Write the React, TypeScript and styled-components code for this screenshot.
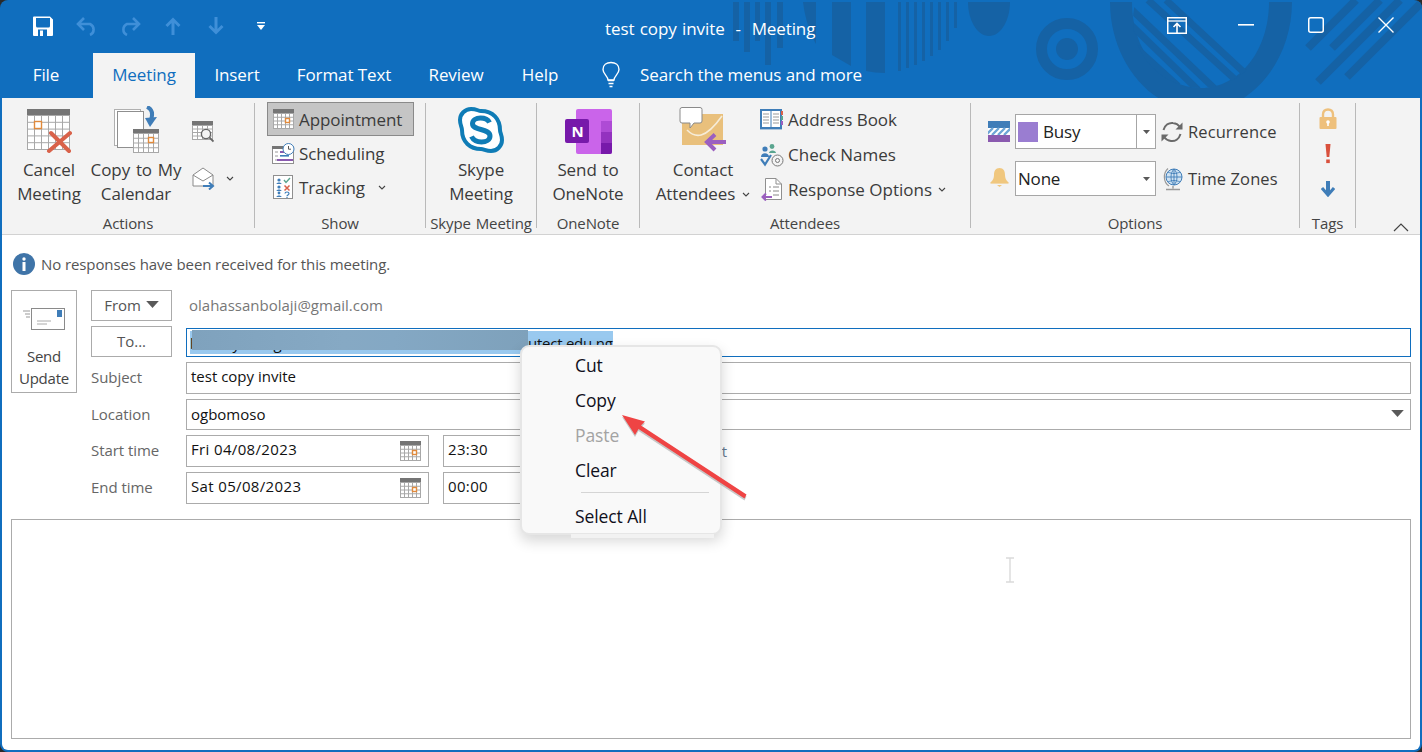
import React from 'react';
import styled, { createGlobalStyle } from 'styled-components';

const FONT = `'Open Sans', 'Noto Sans', 'Liberation Sans', sans-serif`;
const BLUE = '#106ebe';
const PATTERN = '#1562a5';

const Global = createGlobalStyle`
  html, body { margin: 0; padding: 0; background: #222; }
  * { box-sizing: border-box; }
  svg { display: block; flex-shrink: 0; }
`;

const Page = styled.div`
  width: 1422px;
  height: 752px;
  background: #2a2a2a;
  font-family: ${FONT};
  overflow: hidden;
`;

const Win = styled.div`
  position: relative;
  width: 100%;
  height: 100%;
  background: ${BLUE};
  border-radius: 8px;
  padding: 0 2px 2px;
  display: flex;
  flex-direction: column;
  overflow: hidden;
`;

/* ---------- title bar ---------- */

const Header = styled.header`
  position: relative;
  height: 98px;
  flex-shrink: 0;
`;

const PatternLayer = styled.svg`
  position: absolute;
  left: -2px;
  top: 0;
`;

const TitleRow = styled.div`
  position: relative;
  height: 53px;
  display: grid;
  grid-template-columns: 603px 1fr auto;
  align-items: center;
  color: #fff;
`;

const Qat = styled.div`
  display: flex;
  align-items: center;
  padding: 0 0 0 31px;
  height: 53px;
  margin-top: -2px;
`;

const QatSlot = styled.div<{ $w: number }>`
  width: ${(p) => p.$w}px;
`;

const Title = styled.div`
  font-size: 17px;
  letter-spacing: -0.1px;
  word-spacing: 1.1px;
  white-space: pre;
  margin-top: 3px;
`;

const Caption = styled.div`
  display: flex;
  align-items: center;
  height: 53px;
  margin-top: -3px;
`;

const CaptionBtn = styled.div<{ $w: number }>`
  width: ${(p) => p.$w}px;
  display: flex;
  justify-content: center;
`;

const TabRow = styled.nav`
  position: relative;
  height: 45px;
  display: grid;
  grid-template-columns: 91px 102px 84px 130px 94px 74px auto;
  align-items: stretch;
`;

const Tab = styled.div<{ $active?: boolean }>`
  display: flex;
  align-items: center;
  justify-content: center;
  padding-bottom: 2px;
  font-size: 17px;
  letter-spacing: -0.1px;
  color: ${(p) => (p.$active ? BLUE : '#fff')};
  background: ${(p) => (p.$active ? '#f3f3f3' : 'transparent')};
`;

const FileTab = styled(Tab)`
  padding-right: 3px;
`;

const SearchBox = styled.div`
  display: flex;
  align-items: center;
  color: #fff;
  font-size: 17px;
  letter-spacing: -0.1px;
  padding: 0 0 2px 24px;
  gap: 19px;
`;

/* ---------- ribbon ---------- */

const Ribbon = styled.section`
  height: 137px;
  flex-shrink: 0;
  background: #f3f3f3;
  border-bottom: 1px solid #d2d2d2;
  display: flex;
  color: #3b3b3b;
`;

const Group = styled.div<{ $w: number }>`
  width: ${(p) => p.$w}px;
  display: flex;
  flex-direction: column;
`;

const GroupBody = styled.div<{ $pad?: number }>`
  display: flex;
  flex: 1;
  padding-left: ${(p) => p.$pad ?? 0}px;
  min-height: 0;
`;

const GroupLabel = styled.div`
  height: 20px;
  margin-bottom: 1px;
  line-height: 20px;
  text-align: center;
  font-size: 15px;
  letter-spacing: -0.1px;
  word-spacing: 1px;
  white-space: nowrap;
  color: #444;
`;

const Sep = styled.div`
  width: 1px;
  margin: 5px 0 6px;
  background: #b9b9b9;
  flex-shrink: 0;
`;

const BigBtn = styled.div<{ $w: number }>`
  width: ${(p) => p.$w}px;
  display: flex;
  flex-direction: column;
  align-items: center;
  padding-top: 6px;
  font-size: 17px;
  letter-spacing: -0.1px;
  word-spacing: 1.5px;
  line-height: 24px;
  text-align: center;
  white-space: nowrap;
`;

const BigIcon = styled.div`
  height: 54px;
  display: flex;
  align-items: flex-end;
  justify-content: center;
  padding-bottom: 4px;
`;

const CaretLine = styled.span`
  display: flex;
  align-items: center;
  justify-content: center;
  gap: 7px;
`;

const SmallIconCol = styled.div`
  margin-left: 8px;
  padding-top: 23px;
  display: flex;
  flex-direction: column;
  gap: 24px;
`;

const IconWithCaret = styled.div`
  display: flex;
  align-items: center;
  gap: 11px;
`;

const ShowCol = styled.div`
  width: 147px;
  padding-top: 4px;
  display: flex;
  flex-direction: column;
`;

const ShowRow = styled.div<{ $on?: boolean }>`
  height: 34px;
  display: flex;
  align-items: center;
  padding-left: 4px;
  font-size: 17px;
  letter-spacing: -0.1px;
  border: 1px solid ${(p) => (p.$on ? '#8a8a8a' : 'transparent')};
  background: ${(p) => (p.$on ? '#c5c5c5' : 'transparent')};
`;

const RowIcon = styled.div<{ $w: number }>`
  width: ${(p) => p.$w}px;
  display: flex;
  justify-content: center;
  margin-right: 5px;
`;

const Caret = styled.span<{ $ml: number }>`
  margin-left: ${(p) => p.$ml}px;
`;

const SmallCol = styled.div`
  padding-top: 4px;
  display: flex;
  flex-direction: column;
`;

const SmallRow = styled.div`
  height: 35px;
  display: flex;
  align-items: center;
  font-size: 17px;
  white-space: nowrap;
`;

const OptionsGrid = styled.div`
  padding-top: 16px;
  display: grid;
  grid-template-columns: 22px 141px auto;
  grid-auto-rows: 35px;
  column-gap: 5px;
  row-gap: 12px;
  align-items: center;
`;

const BellSlot = styled.div`
  display: flex;
  justify-content: center;
  margin-top: -3px;
`;

const DropSelect = styled.div`
  height: 35px;
  background: #fff;
  border: 1px solid #a6a6a6;
  display: flex;
  align-items: center;
  font-size: 17px;
  color: #222;
  padding-left: 2px;
`;

const Swatch = styled.span`
  width: 20px;
  height: 20px;
  background: #9a7dd1;
  margin-right: 5px;
`;

const SelectText = styled.span`
  flex: 1;
  letter-spacing: -0.2px;
`;

const SelectArrow = styled.span<{ $split?: boolean }>`
  width: 19px;
  height: 33px;
  display: flex;
  align-items: center;
  justify-content: center;
  border-left: 1px solid ${(p) => (p.$split ? '#a6a6a6' : 'transparent')};
`;

const OptionSide = styled.div`
  display: flex;
  align-items: center;
  gap: 4px;
  font-size: 16.5px;
  letter-spacing: 0.1px;
  white-space: nowrap;
  margin-left: -1px;
`;

const TagCol = styled.div`
  padding-top: 3px;
  display: flex;
  flex-direction: column;
  align-items: center;
  width: 100%;
`;

const TagSlot = styled.div`
  height: 35px;
  display: flex;
  align-items: center;
`;

const Collapse = styled.div`
  margin-left: auto;
  margin-right: 11px;
  align-self: flex-end;
  padding-bottom: 2px;
`;

/* ---------- form ---------- */

const Content = styled.main`
  flex: 1;
  background: #fff;
  display: flex;
  flex-direction: column;
  min-height: 0;
  border-bottom-left-radius: 6px;
  border-bottom-right-radius: 6px;
`;

const InfoBar = styled.div`
  height: 55px;
  padding: 3px 0 0 11px;
  display: flex;
  align-items: center;
  gap: 6px;
  font-size: 15px;
  letter-spacing: -0.1px;
  color: #555;
  flex-shrink: 0;
`;

const Form = styled.div`
  display: flex;
  padding: 0 9px;
  flex-shrink: 0;
`;

const SendBtn = styled.div`
  width: 66px;
  height: 103px;
  margin-right: 14px;
  border: 1px solid #ababab;
  display: flex;
  flex-direction: column;
  align-items: center;
  padding-top: 16px;
  font-size: 15px;
  letter-spacing: -0.2px;
  line-height: 21.5px;
  color: #444;
  text-align: center;
`;

const SendIcon = styled.div`
  height: 39px;
`;

const Fields = styled.div`
  flex: 1;
  display: flex;
  flex-direction: column;
  gap: 5px;
`;

const FieldRow = styled.div<{ $h: number }>`
  height: ${(p) => p.$h}px;
  display: flex;
  align-items: center;
`;

const FieldLabel = styled.div`
  width: 95px;
  padding-bottom: 2px;
  font-size: 15px;
  letter-spacing: -0.05px;
  color: #666;
  flex-shrink: 0;
`;

const SideBtn = styled.div`
  width: 81px;
  height: 31px;
  margin-right: 14px;
  padding-bottom: 2px;
  border: 1px solid #ababab;
  display: flex;
  align-items: center;
  justify-content: center;
  gap: 5px;
  font-size: 15px;
  letter-spacing: -0.05px;
  color: #555;
  flex-shrink: 0;
`;

const FromAddress = styled.div`
  margin-left: 3px;
  padding-bottom: 2px;
  font-size: 15px;
  color: #777;
`;

const TextInput = styled.div<{ $lift?: number }>`
  flex: 1;
  height: 100%;
  border: 1px solid #ababab;
  padding-left: 4px;
  padding-bottom: ${(p) => p.$lift ?? 0}px;
  display: flex;
  align-items: center;
  font-size: 15px;
  color: #111;
`;

const ToInput = styled(TextInput)`
  position: relative;
  height: 29px;
  margin-top: 1px;
  border-color: #106ebe;
  overflow: hidden;
  padding-left: 3px;
`;

const Selected = styled.div`
  background: #99c9ef;
  height: 23px;
  display: flex;
  align-items: flex-end;
  line-height: 22px;
  letter-spacing: -0.25px;
  white-space: nowrap;
`;

const HiddenName = styled.span`
  width: 338px;
  word-spacing: 30px;
  overflow: hidden;
`;

const BlurPatch = styled.div`
  position: absolute;
  left: 5px;
  top: 1px;
  width: 336px;
  height: 20px;
  background: linear-gradient(90deg, #7fa2bd, #86a9c4 45%, #84a8c4 60%, #7ea1bb);
`;

const DateInput = styled(TextInput)<{ $w: number }>`
  flex: none;
  width: ${(p) => p.$w}px;
  justify-content: space-between;
  padding-right: 7px;
  letter-spacing: 0.35px;
`;

const DateIconSlot = styled.span`
  margin-bottom: -4px;
`;

const Gap14 = styled.div`
  width: 14px;
  flex-shrink: 0;
`;

const AllDay = styled.div`
  width: 167px;
  text-align: right;
  font-size: 15px;
  color: #64788e;
  white-space: nowrap;
`;

const LocationArrow = styled.div`
  margin-left: auto;
  margin-right: 6px;
`;

const Body = styled.div`
  position: relative;
  flex: 1;
  margin: 15px 9px 11px;
  border: 1px solid #ababab;
`;

const Cursor = styled.svg`
  position: absolute;
  left: 991px;
  top: 37px;
`;

/* ---------- context menu + annotation ---------- */

const Menu = styled.div`
  position: absolute;
  left: 520px;
  top: 345px;
  width: 202px;
  height: 190px;
  background: #f9f9f9;
  border: 2px solid #e6e6e6;
  border-radius: 9px;
  box-shadow: 0 6px 14px rgba(0, 0, 0, 0.16);
  padding-top: 2px;
  font-size: 17.5px;
  letter-spacing: -0.1px;
  color: #10101c;
`;

const MenuItem = styled.div<{ $off?: boolean }>`
  height: 35px;
  line-height: 33px;
  padding-left: 53px;
  color: ${(p) => (p.$off ? '#a3a3a3' : 'inherit')};
`;

const MenuSep = styled.div`
  height: 1px;
  margin: 3px 11px 7px 59px;
  background: #d5d5d5;
`;

const MenuFoot = styled.div`
  height: 4px;
  margin: -1px 6px 0 49px;
  background: #f2f2f2;
`;

const Annotation = styled.svg`
  position: absolute;
  left: 610px;
  top: 405px;
`;

/* ---------- drawings ---------- */

const Pattern = () => (
  <PatternLayer width={1422} height={98} viewBox="0 0 1422 98">
    <defs>
      <clipPath id="inner">
        <circle cx={1201} cy={20} r={68} />
      </clipPath>
    </defs>
    <g fill={PATTERN}>
      <rect x={733} y={2} width={6} height={39} />
      <rect x={744} y={2} width={6} height={50} />
      <rect x={755} y={2} width={5} height={39} />
      <rect x={765} y={2} width={6} height={63} />
      <rect x={777} y={2} width={6} height={46} />
      <path d="M803 2H816V44C810 34 805 18 803 2Z" />
      <path d="M832 2H851V66L832 55Z" />
      <path d="M866 2H885V73C878 73 872 72 866 71Z" />
      <rect x={898} y={2} width={3} height={69} />
      <rect x={906} y={2} width={3} height={66} />
      <rect x={914} y={2} width={3} height={63} />
      <rect x={922} y={2} width={3} height={59} />
      <rect x={930} y={2} width={3} height={54} />
      <rect x={938} y={2} width={3} height={48} />
      <rect x={946} y={2} width={3} height={39} />
      <rect x={954} y={2} width={3} height={26} />
      <path d="M968 2H1010C1010 20 1001 36 989 36C977 36 968 20 968 2Z" />
    </g>
    <circle cx={1067} cy={49} r={25.5} fill="none" stroke={PATTERN} strokeWidth={11} />
    <circle cx={1067} cy={49} r={11} fill={PATTERN} />
    <path d="M1110 2C1110 60 1150 111 1201 111C1252 111 1292 60 1292 2H1269C1269 50 1240 88 1201 88C1162 88 1132 50 1132 2Z" fill={PATTERN} />
    <g clipPath="url(#inner)" stroke={PATTERN} strokeWidth={7} fill="none">
      <path d="M1148 0L1240 84" />
      <path d="M1166 0L1250 78" />
      <path d="M1130 8L1216 90" />
      <path d="M1130 24L1198 90" />
      <path d="M1134 46L1178 86" />
    </g>
    <g stroke={PATTERN} strokeWidth={8} fill="none">
      <path d="M1308 48L1356 0" />
      <path d="M1332 48L1380 0" />
      <path d="M1318 82L1400 0" />
      <path d="M1347 77L1424 0" />
    </g>
  </PatternLayer>
);

const Cal = ({ w, h, cols, rows, mark, head = 4 }: { w: number; h: number; cols: number; rows: number; mark?: [number, number, number]; head?: number }) => {
  const lines: React.ReactNode[] = [];
  for (let i = 0; i <= cols; i++) {
    const x = 0.5 + ((w - 1) * i) / cols;
    lines.push(<line key={`c${i}`} x1={x} x2={x} y1={head} y2={h} stroke="#a8a8a8" />);
  }
  for (let i = 0; i <= rows; i++) {
    const y = head + 0.5 + ((h - head - 1) * i) / rows;
    lines.push(<line key={`r${i}`} x1={0} x2={w} y1={y} y2={y} stroke="#a8a8a8" />);
  }
  return (
    <g>
      <rect width={w} height={h} fill="#fff" />
      {lines}
      <rect width={w} height={head} fill="#757575" />
      {mark && <rect x={mark[0] + 0.5} y={mark[1] + 0.5} width={mark[2]} height={mark[2]} fill="#fff" stroke="#e08a3c" strokeWidth={1.4} />}
    </g>
  );
};

const SmallCal = () => (
  <svg width={21} height={20} viewBox="0 0 21 20">
    <Cal w={21} h={20} cols={5} rows={4} mark={[12, 9, 4]} />
  </svg>
);

const Chevron = ({ size = 8 }: { size?: number }) => (
  <svg width={size} height={5} viewBox="0 0 8 5">
    <path d="M1 1L4 4L7 1" fill="none" stroke="#444" strokeWidth={1.1} />
  </svg>
);

const Tri = ({ w = 9, h = 5 }: { w?: number; h?: number }) => (
  <svg width={w} height={h} viewBox="0 0 9 5">
    <path d="M0 0H9L4.5 5Z" fill="#595959" />
  </svg>
);

const CancelIcon = () => (
  <svg width={46} height={46} viewBox="-1 0 46 46">
    <g transform="translate(0 1)">
      <Cal w={43} h={41} cols={6} rows={5} mark={[7, 12, 7]} head={6} />
    </g>
    <path d="M22 43L43 25M24 25L42 43" stroke="#d9624a" strokeWidth={4} strokeLinecap="round" fill="none" />
  </svg>
);

const CopyCalIcon = () => (
  <svg width={46} height={48} viewBox="-1 0 46 48">
    <rect x={0.5} y={3.5} width={26} height={36} fill="#fff" stroke="#b0b0b0" />
    <rect x={3.5} y={5.5} width={26} height={36} fill="#fff" stroke="#8f8f8f" />
    <path d="M33 1C38 3 39 8 37 14" fill="none" stroke="#3f7db8" strokeWidth={4} />
    <path d="M31 12L43 11L36 21Z" fill="#3f7db8" />
    <g transform="translate(19 23)">
      <Cal w={26} h={24} cols={5} rows={4} mark={[15, 8, 5]} />
    </g>
  </svg>
);

const CalSearchIcon = () => (
  <svg width={22} height={22} viewBox="0 0 22 22">
    <Cal w={21} h={19} cols={4} rows={4} />
    <circle cx={14} cy={13} r={4.6} fill="#f3f3f3" stroke="#666" strokeWidth={1.4} />
    <path d="M17.5 16.5L21.5 20.5" stroke="#666" strokeWidth={1.8} />
  </svg>
);

const MailForwardIcon = () => (
  <svg width={23} height={23} viewBox="0 0 23 23">
    <path d="M1 8L11 1L21 8V19H1Z" fill="#fff" stroke="#8a8a8a" />
    <path d="M1 8L11 14L21 8" fill="#fff" stroke="#8a8a8a" />
    <path d="M11 19H20M17 15.5L21 19L17 22.5" fill="none" stroke="#3f7db8" strokeWidth={2} />
  </svg>
);

const SchedulingIcon = () => (
  <svg width={23} height={21} viewBox="0 0 23 21">
    <rect x={0.5} y={3.5} width={21} height={17} fill="#fff" stroke="#8f8f8f" />
    <rect x={0} y={3} width={12} height={3} fill="#757575" />
    <path d="M3 9H6M3 13H6M3 17H6" stroke="#999" />
    <rect x={8} y={8} width={4} height={2} fill="#8a5aaf" />
    <rect x={8} y={12} width={9} height={1.6} fill="#3f7db8" />
    <rect x={5} y={16} width={16} height={2} fill="#8a5aaf" />
    <circle cx={16.5} cy={6} r={5.5} fill="#fff" stroke="#3f7db8" />
    <path d="M16.5 3V6.2H19" fill="none" stroke="#555" />
  </svg>
);

const TrackingIcon = () => (
  <svg width={20} height={24} viewBox="0 0 20 24">
    <rect x={0.5} y={0.5} width={19} height={23} fill="#fff" stroke="#8f8f8f" />
    <circle cx={6} cy={5} r={1.6} fill="#3f7db8" />
    <path d="M3.5 9C3.5 7 8.5 7 8.5 9Z" fill="#3f7db8" />
    <circle cx={6} cy={12} r={1.6} fill="#3f7db8" />
    <path d="M3.5 16C3.5 14 8.5 14 8.5 16Z" fill="#3f7db8" />
    <circle cx={6} cy={18} r={1.4} fill="#3f7db8" />
    <path d="M3.5 22C3.5 20 8.5 20 8.5 22Z" fill="#3f7db8" />
    <path d="M11 5L13 7.5L17 3" fill="none" stroke="#5aa58f" strokeWidth={1.4} />
    <path d="M11.5 10.5L16.5 15.5M16.5 10.5L11.5 15.5" stroke="#d9624a" strokeWidth={1.5} />
    <path d="M12 18.5C12 16.5 16 16.5 16 18.5C16 20 14 20 14 21.3M14 22V23" fill="none" stroke="#3f7db8" strokeWidth={1.2} />
  </svg>
);

const SkypeIcon = () => (
  <svg width={48} height={48} viewBox="0 0 48 48">
    <path d="M14 3C20 3 21 5 24 5C36 5 43 13 43 24C43 27 45 29 45 34C45 40 40 45 34 45C29 45 27 43 24 43C13 43 5 36 5 24C5 21 3 19 3 14C3 8 8 3 14 3Z" fill="#fff" stroke="#0f7cb6" strokeWidth={4} />
    <path d="M32.5 16.5C30.5 12.5 26.5 12 23.5 12C19 12 15.5 14 15.5 17.8C15.5 25 33 22 33 30C33 34 29 36 24.5 36C20.5 36 16.5 34.5 14.5 30.5" fill="none" stroke="#0f7cb6" strokeWidth={5} />
  </svg>
);

const NoteLetter = styled.text`
  font-family: ${FONT};
  font-size: 15px;
  font-weight: 700;
  fill: #fff;
`;

const OneNoteIcon = () => (
  <svg width={47} height={45} viewBox="0 0 47 45">
    <rect x={11} y={0} width={36} height={45} rx={2} fill="#ca64ea" />
    <rect x={36} y={12} width={11} height={11} fill="#ae4bd5" />
    <rect x={36} y={23} width={11} height={11} fill="#9332bf" />
    <path d="M36 34H47V43A2 2 0 0 1 45 45H36Z" fill="#7719aa" />
    <rect x={0} y={10} width={24} height={24} rx={2} fill="#7719aa" />
    <NoteLetter x={6.5} y={27.5}>N</NoteLetter>
  </svg>
);

const ContactIcon = () => (
  <svg width={48} height={48} viewBox="0 0 48 48">
    <rect x={3} y={8} width={41} height={31} fill="#e9c07c" />
    <path d="M8 24C16 32 26 34 43 10" fill="none" stroke="#f6ecd8" strokeWidth={1.6} />
    <path d="M3 1.5H21A2 2 0 0 1 23 3.5V15A2 2 0 0 1 21 17H15L11 22V17H3A2 2 0 0 1 1 15V3.5A2 2 0 0 1 3 1.5Z" fill="#fff" stroke="#8a8a8a" />
    <path d="M47 36H30M36 28.5L28 36L36 44" fill="none" stroke="#9b5fc0" strokeWidth={4} />
  </svg>
);

const AddressIcon = () => (
  <svg width={23} height={21} viewBox="0 0 23 21">
    <rect x={1} y={1} width={20} height={18} fill="#fff" stroke="#3f7db8" strokeWidth={2} />
    <path d="M11 2V19" stroke="#3f7db8" />
    <path d="M3 5H9M3 8H9M3 11H9M3 14H9M13 5H19M13 8H19M13 11H19M13 14H19" stroke="#999" />
    <rect x={0} y={18} width={22} height={2.4} fill="#3f7db8" />
    <rect x={21} y={2} width={2} height={4} fill="#d9624a" />
    <rect x={21} y={7} width={2} height={4} fill="#5aa58f" />
    <rect x={21} y={12} width={2} height={4} fill="#9b5fc0" />
  </svg>
);

const CheckNamesIcon = () => (
  <svg width={24} height={24} viewBox="0 0 24 24">
    <circle cx={5} cy={6} r={2.6} fill="#3f7db8" />
    <path d="M1 14C1 9 9 9 9 14Z" fill="#3f7db8" />
    <circle cx={12} cy={3.5} r={2.4} fill="#5aa58f" />
    <path d="M9 10C9 6.5 16 6.5 16 10Z" fill="#5aa58f" />
    <path d="M1 16L5 21.5L11 12" fill="none" stroke="#3f7db8" strokeWidth={2.2} />
    <circle cx={17.5} cy={17.5} r={5.5} fill="none" stroke="#777" />
    <circle cx={17.5} cy={17.5} r={2} fill="none" stroke="#777" />
  </svg>
);

const ResponseIcon = () => (
  <svg width={22} height={23} viewBox="0 0 22 23">
    <path d="M4.5 0.5H15L20.5 6V21.5H4.5Z" fill="#fff" stroke="#8f8f8f" />
    <path d="M15 0.5V6H20.5" fill="none" stroke="#8f8f8f" />
    <path d="M8 9H10M12 9H18M8 13H10M12 13H18M12 17H18" stroke="#888" />
    <path d="M11 19H1.5M5 15.5L1.5 19L5 22.5" fill="none" stroke="#9b5fc0" strokeWidth={2} />
  </svg>
);

const BusyIcon = () => (
  <svg width={22} height={21} viewBox="0 0 22 21">
    <rect width={22} height={7} fill="#3f7db8" />
    <rect y={7} width={22} height={7} fill="#fff" />
    <path d="M-2 14L5 7M4 14L11 7M10 14L17 7M16 14L23 7" stroke="#6ea5d5" strokeWidth={2.4} />
    <rect y={14} width={22} height={7} fill="#8a5aaf" />
  </svg>
);

const BellIcon = () => (
  <svg width={19} height={20} viewBox="0 0 19 20">
    <path d="M9.5 1C13.5 1 15 4 15 8C15 11 16 13 18 15H1C3 13 4 11 4 8C4 4 5.5 1 9.5 1Z" fill="#f0c77e" />
    <rect x={0.5} y={15} width={18} height={1.6} fill="#f0c77e" />
    <path d="M7 18H12L9.5 20Z" fill="#f0c77e" />
  </svg>
);

const RecurrenceIcon = () => (
  <svg width={24} height={24} viewBox="0 0 24 24">
    <path d="M3.5 10C5 5 9 2.5 13 3C16 3.3 18.5 5 20 7" fill="none" stroke="#6a6a6a" strokeWidth={2} />
    <path d="M22.5 2.5V9.5H15.5Z" fill="#6a6a6a" />
    <path d="M20.5 14C19 19 15 21.5 11 21C8 20.7 5.5 19 4 17" fill="none" stroke="#6a6a6a" strokeWidth={2} />
    <path d="M1.5 21.5V14.5H8.5Z" fill="#6a6a6a" />
  </svg>
);

const GlobeIcon = () => (
  <svg width={24} height={24} viewBox="-3 0 24 24">
    <circle cx={11} cy={10} r={8} fill="#cfe2f2" stroke="#3f7db8" />
    <path d="M3 10H19M11 2V18M5 5C9 7 13 7 17 5M5 15C9 13 13 13 17 15M11 2C7 6 7 14 11 18M11 2C15 6 15 14 11 18" fill="none" stroke="#3f7db8" strokeWidth={0.9} />
    <path d="M5 1.5C0 6 0 15 6 19" fill="none" stroke="#999" strokeWidth={1.2} />
    <path d="M10 19V21.5M3 22.5H17" stroke="#999" strokeWidth={1.4} />
  </svg>
);

const LockIcon = () => (
  <svg width={18} height={22} viewBox="0 0 18 22">
    <path d="M4 10V6.5C4 3 6 1.5 9 1.5C12 1.5 14 3 14 6.5V10" fill="none" stroke="#eec07c" strokeWidth={2.4} />
    <rect x={0.5} y={9} width={17} height={12} rx={1} fill="#eec07c" />
    <circle cx={9} cy={14} r={1.8} fill="#fff" />
    <rect x={8.2} y={14} width={1.6} height={4} fill="#fff" />
  </svg>
);

const ImportantIcon = () => (
  <svg width={6} height={20} viewBox="0 0 6 20">
    <path d="M0.5 0H5.5L4.3 13H1.7Z" fill="#d9503c" />
    <rect x={1.2} y={15.5} width={3.6} height={3.6} fill="#d9503c" />
  </svg>
);

const LowIcon = () => (
  <svg width={14} height={17} viewBox="0 0 14 17">
    <path d="M7 15V1" stroke="#3f7db8" strokeWidth={4} />
    <path d="M1 8L7 15L13 8" fill="none" stroke="#3f7db8" strokeWidth={3} />
  </svg>
);

const SendEnvelope = () => (
  <svg width={42} height={24} viewBox="0 0 42 24">
    <rect x={8.5} y={1.5} width={33} height={21} fill="#fff" stroke="#8a8a8a" />
    <rect x={34} y={3} width={5} height={7} fill="#3f7db8" />
    <path d="M14 14H28M14 17H24" stroke="#aaa" />
    <path d="M0 4H7M2 7H7M3 10H7" stroke="#999" />
  </svg>
);

const InfoIcon = () => (
  <svg width={22} height={22} viewBox="0 0 22 22">
    <circle cx={11} cy={11} r={11} fill="#3f74a8" />
    <circle cx={11} cy={6} r={1.7} fill="#fff" />
    <rect x={9.5} y={9} width={3} height={9} fill="#fff" />
  </svg>
);

const Bulb = () => (
  <svg width={20} height={27} viewBox="0 0 20 27">
    <path d="M7 19C7 15 2 13 2 8.5C2 4 5.5 1.5 10 1.5C14.5 1.5 18 4 18 8.5C18 13 13 15 13 19Z" fill="none" stroke="#fff" strokeWidth={1.4} />
    <path d="M7 19.5H13M7.5 22.5H12.5M8.5 25.5H11.5" stroke="#fff" strokeWidth={1.6} />
  </svg>
);

const App: React.FC = () => (
  <Page>
    <Global />
    <Win>
      <Header>
        <Pattern />
        <TitleRow>
          <Qat>
            <QatSlot $w={43}>
              <svg width={20} height={20} viewBox="0 0 20 20">
                <path d="M0 1.5A1 1 0 0 1 1 .5H17L20 3.5V19A1 1 0 0 1 19 20H1A1 1 0 0 1 0 19Z" fill="#fff" />
                <path d="M3 2H17V10A1.5 1.5 0 0 1 15.5 11.5H4.5A1.5 1.5 0 0 1 3 10Z" fill={BLUE} />
                <rect x={5} y={13.5} width={9} height={6.5} fill={BLUE} />
                <rect x={7} y={14.5} width={3} height={5.5} fill="#fff" />
              </svg>
            </QatSlot>
            <QatSlot $w={43}>
              <svg width={22} height={20} viewBox="0 0 22 20">
                <path d="M8 2L2 8L8 14M2 8H14A6 6 0 0 1 14 19" fill="none" stroke="#3f8fd8" strokeWidth={2.6} />
              </svg>
            </QatSlot>
            <QatSlot $w={46}>
              <svg width={22} height={20} viewBox="0 0 22 20">
                <path d="M14 2L20 8L14 14M20 8H8A6 6 0 0 0 8 19" fill="none" stroke="#3f8fd8" strokeWidth={2.6} />
              </svg>
            </QatSlot>
            <QatSlot $w={43}>
              <svg width={16} height={18} viewBox="0 0 16 18">
                <path d="M8 18V3M1.5 9L8 2.5L14.5 9" fill="none" stroke="#3f8fd8" strokeWidth={3} />
              </svg>
            </QatSlot>
            <QatSlot $w={49}>
              <svg width={16} height={18} viewBox="0 0 16 18">
                <path d="M8 0V15M1.5 9L8 15.5L14.5 9" fill="none" stroke="#3f8fd8" strokeWidth={3} />
              </svg>
            </QatSlot>
            <svg width={8} height={8} viewBox="0 0 8 8">
              <rect width={8} height={1.4} fill="#fff" />
              <path d="M0 3H8L4 8Z" fill="#fff" />
            </svg>
          </Qat>
          <Title>test copy invite  -  Meeting</Title>
          <Caption>
            <CaptionBtn $w={69}>
              <svg width={20} height={17} viewBox="0 0 20 17">
                <rect x={0.75} y={0.75} width={18.5} height={15.5} fill="none" stroke="#fff" strokeWidth={1.5} />
                <path d="M1 4H19" stroke="#fff" strokeWidth={1.3} />
                <path d="M10 16V7.5M6.5 10L10 6.5L13.5 10" fill="none" stroke="#fff" strokeWidth={1.6} />
              </svg>
            </CaptionBtn>
            <CaptionBtn $w={70}>
              <svg width={16} height={2} viewBox="0 0 16 2">
                <rect width={16} height={1.6} fill="#fff" />
              </svg>
            </CaptionBtn>
            <CaptionBtn $w={70}>
              <svg width={16} height={16} viewBox="0 0 16 16">
                <rect x={0.75} y={0.75} width={14.5} height={14.5} rx={2} fill="none" stroke="#fff" strokeWidth={1.5} />
              </svg>
            </CaptionBtn>
            <CaptionBtn $w={69}>
              <svg width={16} height={16} viewBox="0 0 16 16">
                <path d="M.5 .5L15.5 15.5M15.5 .5L.5 15.5" stroke="#fff" strokeWidth={1.4} />
              </svg>
            </CaptionBtn>
          </Caption>
        </TitleRow>
        <TabRow>
          <FileTab>File</FileTab>
          <Tab $active>Meeting</Tab>
          <Tab>Insert</Tab>
          <Tab>Format Text</Tab>
          <Tab>Review</Tab>
          <Tab>Help</Tab>
          <SearchBox>
            <Bulb />
            <span>Search the menus and more</span>
          </SearchBox>
        </TabRow>
      </Header>

      <Ribbon>
        <Group $w={252}>
          <GroupBody $pad={8}>
            <BigBtn $w={78}>
              <BigIcon><CancelIcon /></BigIcon>
              <span>Cancel<br />Meeting</span>
            </BigBtn>
            <BigBtn $w={96}>
              <BigIcon><CopyCalIcon /></BigIcon>
              <span>Copy to My<br />Calendar</span>
            </BigBtn>
            <SmallIconCol>
              <CalSearchIcon />
              <IconWithCaret>
                <MailForwardIcon />
                <Chevron />
              </IconWithCaret>
            </SmallIconCol>
          </GroupBody>
          <GroupLabel>Actions</GroupLabel>
        </Group>
        <Sep />
        <Group $w={170}>
          <GroupBody $pad={12}>
            <ShowCol>
              <ShowRow $on>
                <RowIcon $w={22}><SmallCal /></RowIcon>
                Appointment
              </ShowRow>
              <ShowRow>
                <RowIcon $w={22}><SchedulingIcon /></RowIcon>
                Scheduling
              </ShowRow>
              <ShowRow>
                <RowIcon $w={22}><TrackingIcon /></RowIcon>
                Tracking
                <Caret $ml={13}><Chevron /></Caret>
              </ShowRow>
            </ShowCol>
          </GroupBody>
          <GroupLabel>Show</GroupLabel>
        </Group>
        <Sep />
        <Group $w={110}>
          <GroupBody>
            <BigBtn $w={110}>
              <BigIcon><SkypeIcon /></BigIcon>
              <span>Skype<br />Meeting</span>
            </BigBtn>
          </GroupBody>
          <GroupLabel>Skype Meeting</GroupLabel>
        </Group>
        <Sep />
        <Group $w={102}>
          <GroupBody>
            <BigBtn $w={102}>
              <BigIcon><OneNoteIcon /></BigIcon>
              <span>Send to<br />OneNote</span>
            </BigBtn>
          </GroupBody>
          <GroupLabel>OneNote</GroupLabel>
        </Group>
        <Sep />
        <Group $w={330}>
          <GroupBody $pad={6}>
            <BigBtn $w={114}>
              <BigIcon><ContactIcon /></BigIcon>
              <span>Contact</span>
              <CaretLine>Attendees<Chevron /></CaretLine>
            </BigBtn>
            <SmallCol>
              <SmallRow>
                <RowIcon $w={23}><AddressIcon /></RowIcon>
                Address Book
              </SmallRow>
              <SmallRow>
                <RowIcon $w={23}><CheckNamesIcon /></RowIcon>
                Check Names
              </SmallRow>
              <SmallRow>
                <RowIcon $w={23}><ResponseIcon /></RowIcon>
                Response Options
                <Caret $ml={6}><Chevron /></Caret>
              </SmallRow>
            </SmallCol>
          </GroupBody>
          <GroupLabel>Attendees</GroupLabel>
        </Group>
        <Sep />
        <Group $w={328}>
          <GroupBody $pad={17}>
            <OptionsGrid>
              <BusyIcon />
              <DropSelect>
                <Swatch />
                <SelectText>Busy</SelectText>
                <SelectArrow $split><Tri w={7} h={4} /></SelectArrow>
              </DropSelect>
              <OptionSide><RecurrenceIcon />Recurrence</OptionSide>
              <BellSlot><BellIcon /></BellSlot>
              <DropSelect>
                <SelectText>None</SelectText>
                <SelectArrow><Tri w={7} h={4} /></SelectArrow>
              </DropSelect>
              <OptionSide><GlobeIcon />Time Zones</OptionSide>
            </OptionsGrid>
          </GroupBody>
          <GroupLabel>Options</GroupLabel>
        </Group>
        <Sep />
        <Group $w={55}>
          <GroupBody>
            <TagCol>
              <TagSlot><LockIcon /></TagSlot>
              <TagSlot><ImportantIcon /></TagSlot>
              <TagSlot><LowIcon /></TagSlot>
            </TagCol>
          </GroupBody>
          <GroupLabel>Tags</GroupLabel>
        </Group>
        <Sep />
        <Collapse>
          <svg width={16} height={10} viewBox="0 0 16 10">
            <path d="M1 9L8 2L15 9" fill="none" stroke="#444" strokeWidth={1.2} />
          </svg>
        </Collapse>
      </Ribbon>

      <Content>
        <InfoBar>
          <InfoIcon />
          No responses have been received for this meeting.
        </InfoBar>
        <Form>
          <SendBtn>
            <SendIcon><SendEnvelope /></SendIcon>
            <span>Send<br />Update</span>
          </SendBtn>
          <Fields>
            <FieldRow $h={31}>
              <SideBtn>From <Tri w={13} h={7} /></SideBtn>
              <FromAddress>olahassanbolaji@gmail.com</FromAddress>
            </FieldRow>
            <FieldRow $h={31}>
              <SideBtn>To...</SideBtn>
              <ToInput>
                <Selected>
                  <HiddenName>b y g</HiddenName>
                  <span>utect.edu.ng</span>
                </Selected>
                <BlurPatch />
              </ToInput>
            </FieldRow>
            <FieldRow $h={32}>
              <FieldLabel>Subject</FieldLabel>
              <TextInput $lift={5}>test copy invite</TextInput>
            </FieldRow>
            <FieldRow $h={31}>
              <FieldLabel>Location</FieldLabel>
              <TextInput $lift={2}>
                ogbomoso
                <LocationArrow><Tri w={13} h={7} /></LocationArrow>
              </TextInput>
            </FieldRow>
            <FieldRow $h={32}>
              <FieldLabel>Start time</FieldLabel>
              <DateInput $w={243} $lift={4}>
                Fri 04/08/2023
                <DateIconSlot><SmallCal /></DateIconSlot>
              </DateInput>
              <Gap14 />
              <DateInput $w={117} $lift={4}>23:30</DateInput>
              <AllDay>All day event</AllDay>
            </FieldRow>
            <FieldRow $h={32}>
              <FieldLabel>End time</FieldLabel>
              <DateInput $w={243} $lift={4}>
                Sat 05/08/2023
                <DateIconSlot><SmallCal /></DateIconSlot>
              </DateInput>
              <Gap14 />
              <DateInput $w={117} $lift={4}>00:00</DateInput>
            </FieldRow>
          </Fields>
        </Form>
        <Body>
          <Cursor width={14} height={26} viewBox="0 0 14 26">
            <path d="M3 1H11M7 1V25M3 25H11" fill="none" stroke="#dadada" strokeWidth={1.4} />
          </Cursor>
        </Body>
      </Content>

      <Menu>
        <MenuItem>Cut</MenuItem>
        <MenuItem>Copy</MenuItem>
        <MenuItem $off>Paste</MenuItem>
        <MenuItem>Clear</MenuItem>
        <MenuSep />
        <MenuItem>Select All</MenuItem>
        <MenuFoot />
      </Menu>
      <Annotation width={145} height={100} viewBox="610 405 145 100">
        <path d="M622 415L645 421.5L641 425.5L746.5 494.5L744.5 498.5L638.5 429L635 435Z" fill="#8a8a8a" opacity={0.45} transform="translate(0 2)" />
        <path d="M622 415L645 421.5L641 425.5L746.5 494.5L744.5 498.5L638.5 429L635 435Z" fill="#ef4444" />
      </Annotation>
    </Win>
  </Page>
);

export default App;
